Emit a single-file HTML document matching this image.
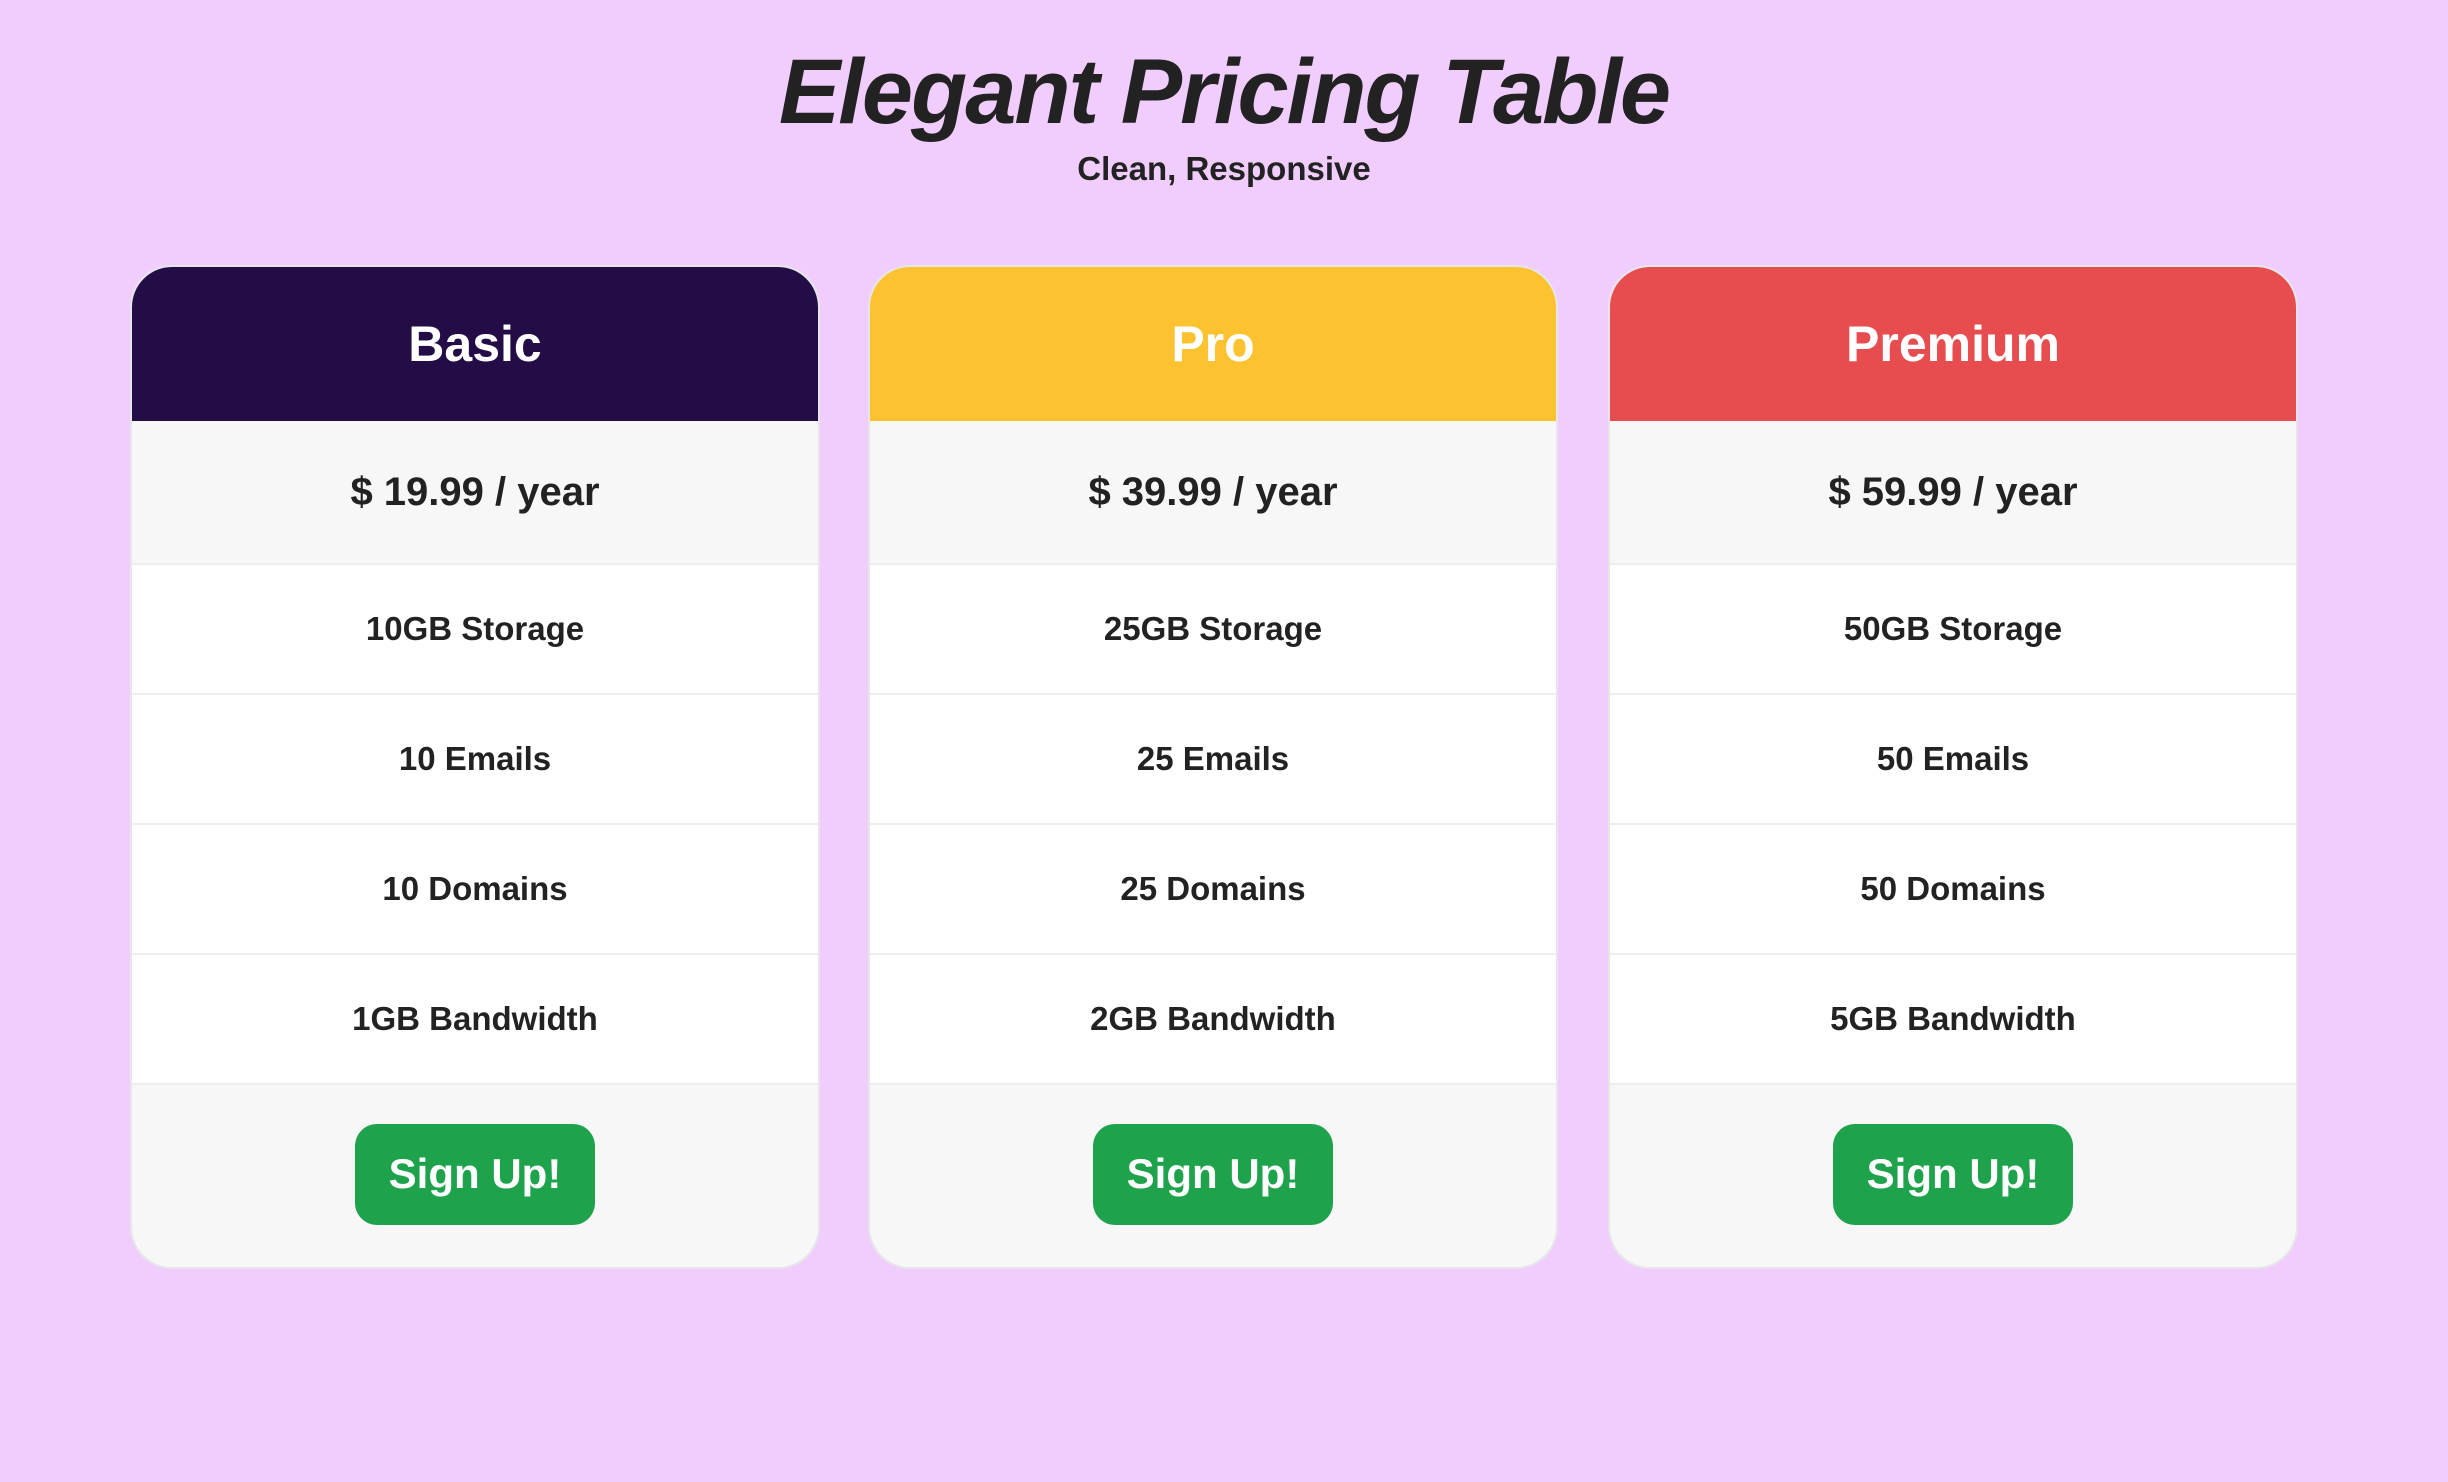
<!DOCTYPE html>
<html><head><meta charset="utf-8"><style>
*{box-sizing:border-box;margin:0;padding:0}
html,body{width:2448px;height:1482px;background:#f1cdfe;font-family:"Liberation Sans",sans-serif;color:#222;overflow:hidden}
h1{position:absolute;top:40px;left:0;width:2448px;text-align:center;font-size:92px;font-style:italic;font-weight:bold;letter-spacing:-2px}
h2{position:absolute;top:150px;left:0;width:2448px;text-align:center;font-size:33px;font-weight:bold}
.card{position:absolute;top:265px;width:690px;height:1004px;border:2px solid #e6e6ea;border-radius:42px;overflow:hidden;background:#f7f7f7}
.hd{height:154px;display:flex;align-items:center;justify-content:center;color:#fff;font-size:50px;font-weight:bold}
.price{height:144px;display:flex;align-items:center;justify-content:center;font-size:40px;font-weight:bold;border-bottom:2px solid #eee}
.f{height:130px;background:#fff;display:flex;align-items:center;justify-content:center;font-size:33px;font-weight:bold;border-bottom:2px solid #eee}
.ft{height:186px;display:flex;align-items:center;justify-content:center}
.btn{width:240px;height:101px;background:#1ea34c;border-radius:22px;color:#fff;font-size:42px;font-weight:bold;display:flex;align-items:center;justify-content:center;margin-top:-8px}
</style></head><body>
<h1>Elegant Pricing Table</h1>
<h2>Clean, Responsive</h2>
<div class="card" style="left:130px"><div class="hd" style="background:#240c47">Basic</div><div class="price">$ 19.99 / year</div><div class="f">10GB Storage</div><div class="f">10 Emails</div><div class="f">10 Domains</div><div class="f">1GB Bandwidth</div><div class="ft"><div class="btn">Sign Up!</div></div></div>
<div class="card" style="left:868px"><div class="hd" style="background:#fcc230">Pro</div><div class="price">$ 39.99 / year</div><div class="f">25GB Storage</div><div class="f">25 Emails</div><div class="f">25 Domains</div><div class="f">2GB Bandwidth</div><div class="ft"><div class="btn">Sign Up!</div></div></div>
<div class="card" style="left:1608px"><div class="hd" style="background:#e74c4f">Premium</div><div class="price">$ 59.99 / year</div><div class="f">50GB Storage</div><div class="f">50 Emails</div><div class="f">50 Domains</div><div class="f">5GB Bandwidth</div><div class="ft"><div class="btn">Sign Up!</div></div></div>
</body></html>
